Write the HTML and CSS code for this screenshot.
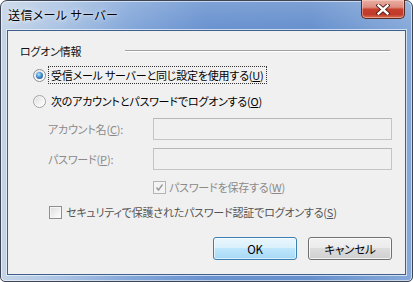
FILE: index.html
```html
<!DOCTYPE html>
<html lang="ja">
<head>
<meta charset="utf-8">
<title>送信メール サーバー</title>
<link rel="stylesheet" href="styles.css">
</head>
<body>
<div class="window">
  <div class="titlebar">
    <span class="title">送信メール サーバー</span>
    <div class="close" aria-label="閉じる">
      <svg width="14" height="11" viewBox="0 0 14 11">
        <path d="M2.5 1.5 L11.5 9.5 M11.5 1.5 L2.5 9.5" stroke="#4a1a14" stroke-width="4.2" stroke-linecap="square" fill="none"/>
        <path d="M2.5 1.5 L11.5 9.5 M11.5 1.5 L2.5 9.5" stroke="#ffffff" stroke-width="2.4" stroke-linecap="square" fill="none"/>
      </svg>
    </div>
  </div>
  <div class="client">
    <div class="group-head">
      <span class="group-label">ログオン情報</span>
      <span class="group-line"></span>
    </div>
    <div class="radio-row row1">
      <span class="radio on"></span>
      <span class="caption focus">受信メール サーバーと同じ設定を使用する(<u>U</u>)</span>
    </div>
    <div class="radio-row row2">
      <span class="radio"></span>
      <span class="caption">次のアカウントとパスワードでログオンする(<u>O</u>)</span>
    </div>
    <div class="field-row f1">
      <span class="field-label">アカウント名(<u>C</u>):</span>
      <span class="input"></span>
    </div>
    <div class="field-row f2">
      <span class="field-label">パスワード(<u>P</u>):</span>
      <span class="input"></span>
    </div>
    <div class="check-row c1">
      <span class="check disabled">
        <svg width="11" height="11" viewBox="0 0 11 11"><path d="M2.5 5.5 L4.5 8 L8.5 2.5" stroke="#9a9a9a" stroke-width="1.4" fill="none"/></svg>
      </span>
      <span class="caption disabled-text">パスワードを保存する(<u>W</u>)</span>
    </div>
    <div class="check-row c2">
      <span class="check"></span>
      <span class="caption dim">セキュリティで保護されたパスワード認証でログオンする(<u>S</u>)</span>
    </div>
    <div class="buttons">
      <span class="btn default">OK</span>
      <span class="btn">キャンセル</span>
    </div>
  </div>
</div>
</body>
</html>
```
FILE: styles.css
```css
html, body {
  margin: 0;
  padding: 0;
  background: #ffffff;
}
body {
  width: 413px;
  height: 282px;
  overflow: hidden;
  font-family: "Noto Sans CJK JP", "Noto Sans", sans-serif;
  font-size: 11px;
  letter-spacing: -0.2px;
  font-feature-settings: "palt";
  color: #1a1a1a;
}
.window {
  box-sizing: border-box;
  width: 413px;
  height: 282px;
  border: 1px solid #3e4656;
  border-radius: 7px 7px 5px 5px;
  background:
    linear-gradient(to bottom, rgba(255,255,255,0.15), rgba(255,255,255,0) 30px),
    linear-gradient(to right, #c6d5e8 0%, #a9c2e3 15%, #82a6d9 32%, #6992cf 50%, #6690cd 75%, #86a9d9 100%);
  box-shadow: inset 0 0 0 1px rgba(255,255,255,0.55);
  display: flex;
  flex-direction: column;
}
.titlebar {
  height: 29px;
  display: flex;
  align-items: flex-start;
  flex: none;
}
.title {
  margin: 5px 0 0 7px;
  line-height: 18px;
  font-size: 12px;
  letter-spacing: 0.4px;
  color: #000;
  text-shadow: 0 0 6px rgba(255,255,255,0.9), 0 0 3px rgba(255,255,255,0.7);
}
.close {
  margin-left: auto;
  margin-right: 7px;
  margin-top: -1px;
  width: 44px;
  height: 19px;
  box-sizing: border-box;
  border: 1px solid #5a2a24;
  border-top: none;
  border-radius: 0 0 5px 5px;
  background: linear-gradient(to bottom, #eab0a4 0%, #dd8d7f 40%, #c7402d 52%, #c0392a 80%, #d8704e 100%);
  box-shadow: inset 0 0 0 1px rgba(255,220,210,0.45);
  display: flex;
  align-items: center;
  justify-content: center;
}
.client {
  flex: 1;
  margin: 0 6px 6px 6px;
  background: #f0f0f0;
  border: 1px solid #3f5f8c;
  box-shadow: 0 0 0 1px rgba(235,242,250,0.75);
  display: flex;
  flex-direction: column;
}
.group-head {
  margin-top: 13px;
  height: 14px;
  display: flex;
  align-items: center;
  padding-left: 12px;
  padding-right: 15px;
}
.group-label {
  width: 105px;
  flex: none;
  line-height: 14px;
  color: #111;
}
.group-line {
  flex: 1;
  height: 0;
  border-top: 1px solid #a0a0a0;
  border-bottom: 1px solid #ffffff;
}
.radio-row {
  height: 20px;
  display: flex;
  align-items: center;
  padding-left: 25px;
}
.row1 { margin-top: 7px; }
.row2 { margin-top: 6px; }
.radio {
  box-sizing: border-box;
  width: 13px;
  height: 13px;
  border-radius: 50%;
  border: 1px solid #8c8f94;
  background: linear-gradient(135deg, #d4d4d4 0%, #f2f2f2 60%, #ffffff 100%);
  box-shadow: inset 0 0 0 1px rgba(255,255,255,0.6);
  display: flex;
  align-items: center;
  justify-content: center;
  flex: none;
}
.row2 .radio {
  border-color: #a2a4a8;
  background: linear-gradient(135deg, #dcdcdc 0%, #f4f4f4 60%, #ffffff 100%);
}
.radio.on::after {
  content: "";
  width: 7px;
  height: 7px;
  border-radius: 50%;
  background: radial-gradient(circle at 40% 35%, #b6e3fb 0%, #4d9ad6 40%, #1d5495 85%, #16417a 100%);
}
.caption {
  line-height: 16px;
  white-space: nowrap;
}
.radio-row .caption {
  margin-left: 2px;
  padding: 0 2px 0 2px;
  border: 1px dotted transparent;
  color: #000;
}
.caption.focus {
  border-color: #333;
}
.field-row {
  height: 22px;
  display: flex;
  align-items: center;
  padding-left: 40px;
}
.f1 { margin-top: 7px; }
.f2 { margin-top: 8px; }
.field-label {
  width: 105px;
  flex: none;
  color: #8a8a8a;
  white-space: nowrap;
}
.input {
  box-sizing: border-box;
  width: 239px;
  height: 22px;
  border: 1px solid #c3c6c9;
  border-top-color: #b5b8bb;
  background: #f0f0f0;
}
.check-row {
  height: 18px;
  display: flex;
  align-items: center;
}
.c1 { margin-top: 8px; padding-left: 145px; }
.c2 { margin-top: 7px; padding-left: 41px; }
.check {
  box-sizing: border-box;
  width: 13px;
  height: 13px;
  border: 1px solid #8e8f8f;
  background: linear-gradient(135deg, #dcdcdc 0%, #f5f5f5 70%, #ffffff 100%);
  box-shadow: inset 0 0 0 1px #f6f6f6;
  flex: none;
  display: flex;
  align-items: center;
  justify-content: center;
}
.check.disabled {
  border-color: #b4b4b4;
  background: #f4f4f4;
  box-shadow: none;
}
.check-row .caption { margin-left: 3px; }
.c2 .caption { margin-left: 4px; }
.disabled-text { color: #8a8a8a; }
.dim { color: #555; }
.buttons {
  margin-top: 16px;
  display: flex;
  justify-content: flex-end;
  gap: 11px;
  padding-right: 13px;
}
.btn {
  box-sizing: border-box;
  width: 84px;
  height: 23px;
  border: 1px solid #707070;
  border-radius: 3px;
  background: linear-gradient(to bottom, #f2f2f2 0%, #ebebeb 49%, #dddddd 50%, #cfcfcf 100%);
  box-shadow: inset 0 0 0 1px rgba(255,255,255,0.75);
  display: flex;
  align-items: center;
  justify-content: center;
  color: #000;
  line-height: 16px;
  font-size: 11.5px;
}
.btn.default {
  border-color: #3c7fb1;
  background: linear-gradient(to bottom, #eaf6fd 0%, #d9f0fc 49%, #bee6fd 50%, #a7d9f5 100%);
  box-shadow: inset 0 0 0 1px rgba(255,255,255,0.6);
}
```
